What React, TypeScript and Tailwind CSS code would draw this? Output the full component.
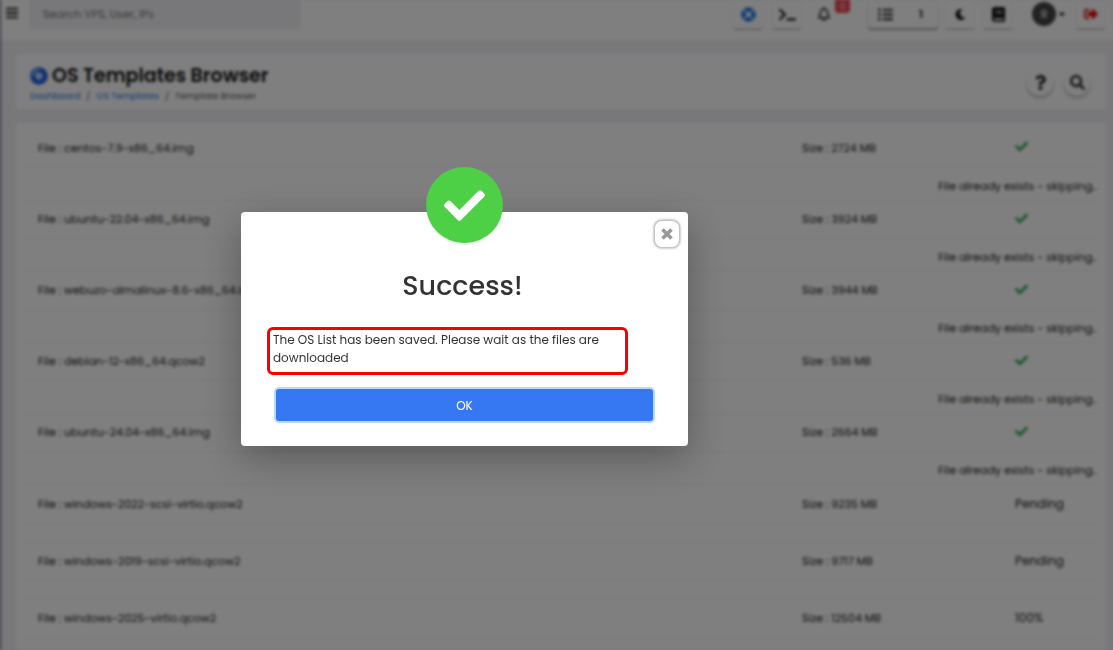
import React, { useState } from 'react';
import {
  FaBars,
  FaBook,
  FaCaretDown,
  FaCheck,
  FaCompactDisc,
  FaLifeRing,
  FaListUl,
  FaMoon,
  FaQuestion,
  FaRegBell,
  FaSearch,
  FaSignOutAlt,
  FaTerminal,
} from 'react-icons/fa';

type Template = {
  file: string;
  size: string;
  status: string;
};

const templates: Template[] = [
  { file: 'centos-7.9-x86_64.img', size: '2724 MB', status: 'exists' },
  { file: 'ubuntu-22.04-x86_64.img', size: '3924 MB', status: 'exists' },
  { file: 'webuzo-almalinux-8.6-x86_64.img', size: '3944 MB', status: 'exists' },
  { file: 'debian-12-x86_64.qcow2', size: '536 MB', status: 'exists' },
  { file: 'ubuntu-24.04-x86_64.img', size: '2664 MB', status: 'exists' },
  { file: 'windows-2022-scsi-virtio.qcow2', size: '9235 MB', status: 'Pending' },
  { file: 'windows-2019-scsi-virtio.qcow2', size: '9717 MB', status: 'Pending' },
  { file: 'windows-2025-virtio.qcow2', size: '12504 MB', status: '100%' },
];

const barButton = 'flex h-7 w-7 items-center justify-center shadow-[0_2px_1px_rgba(0,0,0,0.18)]';
const roundButton =
  'flex h-[26px] w-[26px] items-center justify-center rounded-full text-[15px] text-[#222] shadow-[0_2px_3px_rgba(0,0,0,0.3)]';

const TopBar = () => {
  return (
    <header className="flex h-10 items-start bg-white pl-1 pr-2">
      <button aria-label="Toggle menu" className="mt-1.5 text-[14px] text-[#111]">
        <FaBars />
      </button>
      <input
        type="search"
        aria-label="Search"
        placeholder="Search VPS, User, IPs"
        className="ml-2.5 h-[29px] w-[272px] rounded-b bg-[#f1f1f5] px-3.5 text-[11px] placeholder-[#777]"
      />

      <div className="ml-auto flex items-center text-[13px] text-[#111]">
        <button aria-label="Support" className={`${barButton} text-[15px] text-[#1673e6]`}>
          <FaLifeRing />
        </button>
        <button aria-label="Terminal" className={`${barButton} ml-[11px] text-[17px]`}>
          <FaTerminal />
        </button>
        <button aria-label="Notifications" className="relative ml-[9px] flex h-7 w-7 items-center justify-center text-[14px]">
          <FaRegBell />
          <span className="absolute -right-3 top-0 flex h-[13px] w-[15px] items-center justify-center rounded-b bg-[#f0414b] text-[9px] leading-3 text-white">
            0
          </span>
        </button>
        <button className="ml-[30px] flex h-7 w-[70px] items-center justify-between rounded pl-2.5 pr-[15px] shadow-[0_2px_2px_rgba(0,0,0,0.35)]">
          <FaListUl className="text-[15px]" />
          <span className="text-[11px] font-semibold">1</span>
        </button>
        <button aria-label="Dark mode" className={`${barButton} ml-2 text-[11px]`}>
          <FaMoon />
        </button>
        <button aria-label="Documentation" className={`${barButton} ml-2.5 text-[15px]`}>
          <FaBook />
        </button>
        <button className="ml-5 flex items-center">
          <span className="flex h-6 w-6 items-center justify-center rounded-full bg-[#444] text-[11px] text-white">R</span>
          <FaCaretDown className="ml-px text-[10px]" />
        </button>
        <button aria-label="Log out" className={`${barButton} ml-2.5 text-[14px] text-[#f00000]`}>
          <FaSignOutAlt />
        </button>
      </div>
    </header>
  );
};

const PageHeader = () => {
  return (
    <div className="flex h-[55px] items-center justify-between rounded bg-white pl-3.5 pr-4">
      <div className="pt-1">
        <h1 className="flex items-center gap-1 text-[19px] font-semibold leading-6 text-[#111]">
          <FaCompactDisc className="text-[18px] text-[#1c62e8]" />
          OS Templates Browser
        </h1>
        <nav className="flex gap-1.5 text-[9px] leading-4 text-[#555]">
          <a href="#dashboard" className="text-[#1673e6]">Dashboard</a>
          <span>/</span>
          <a href="#templates" className="text-[#1673e6]">OS Templates</a>
          <span>/</span>
          <span>Template Browser</span>
        </nav>
      </div>
      <div className="flex gap-[11px] pt-0.5">
        <button aria-label="Help" className={roundButton}>
          <FaQuestion />
        </button>
        <button aria-label="Search templates" className={roundButton}>
          <FaSearch />
        </button>
      </div>
    </div>
  );
};

const TemplateRows = ({ template }: { template: Template }) => {
  const exists = template.status === 'exists';

  return (
    <>
      <tr className={`${exists ? 'h-[38px]' : 'h-[39px]'} border-b border-[#e6eefa]`}>
        <td className="px-[13px]">File : {template.file}</td>
        <td className="px-[13px]">Size : {template.size}</td>
        <td className="px-[13px]">
          {exists ? (
            <FaCheck aria-label="Done" className="mb-0.5 text-[13px] text-[#28a745]" />
          ) : (
            <span className="text-[12px]">{template.status}</span>
          )}
        </td>
      </tr>
      <tr className={`${exists ? 'h-[33px]' : 'h-[18px]'} border-b border-[#e6eefa]`}>
        <td colSpan={3} className="pr-px pt-1 text-right">
          {exists && 'File already exists - skipping..'}
        </td>
      </tr>
    </>
  );
};

const SuccessDialog = ({ onClose }: { onClose: () => void }) => {
  return (
    <div className="fixed inset-0 flex items-start justify-center bg-black/50 pr-[184px] pt-[212px] backdrop-blur-[1px]">
      <div
        role="dialog"
        aria-modal="true"
        aria-labelledby="dialog-title"
        className="relative w-full max-w-[447px] rounded bg-white px-[26px] pb-[25px] pt-[54px] shadow-[0_12px_40px_rgba(0,0,0,0.3)]"
      >
        <div className="absolute -top-[45px] left-[185px] flex h-[76px] w-[77px] items-center justify-center rounded-full bg-[#4dcf46] text-white shadow-[0_2px_2px_rgba(0,0,0,0.1)]">
          <FaCheck className="text-[41px]" />
        </div>
        <button
          aria-label="Close"
          onClick={onClose}
          className="absolute right-2 top-2 flex h-7 w-[26px] items-center justify-center rounded-lg border border-[#c4c4c4] bg-white text-[#999] shadow-[0_0_3px_rgba(0,0,0,0.4)]"
        >
          <svg viewBox="0 0 12 12" className="h-3 w-3" stroke="currentColor" strokeWidth="3.6">
            <path d="M1.5 1.5L10.5 10.5M10.5 1.5L1.5 10.5" />
          </svg>
        </button>

        <h2 id="dialog-title" className="pr-1 text-center text-[27px] font-medium leading-10 text-[#333]">
          Success!
        </h2>
        <p className="mt-[21px] h-12 w-full max-w-[361px] rounded-md border-3 border-[#f80000] px-[3px] pt-px text-[12px] leading-[18px] text-[#333]">
          The OS List has been saved. Please wait as the files are downloaded
        </p>
        <div className="mt-3.5 px-[9px]">
          <button
            autoFocus
            onClick={onClose}
            className="h-8 w-full rounded-[3px] bg-[#3578f2] pt-0.5 text-[12px] text-white outline-none ring-2 ring-[#b9dafb]"
          >
            OK
          </button>
        </div>
      </div>
    </div>
  );
};

export default function App() {
  const [open, setOpen] = useState(true);

  return (
    <div className="bg-[#f1f1f6] font-['Poppins','Inter',sans-serif]">
      <div className={`h-screen overflow-hidden border-l border-[#3b3550] ${open ? 'blur-[1px]' : ''}`}>
        <TopBar />
        <main className="flex flex-col gap-3.5 pl-[15px] pr-[7px] pt-3.5">
          <PageHeader />
          <section className="rounded bg-white pb-6 pl-[9px] pr-2 pt-1.5">
            <table className="w-full table-fixed border-collapse text-[11px] leading-4 text-[#222]">
              <colgroup>
                <col />
                <col className="w-[213px]" />
                <col className="w-[96px]" />
              </colgroup>
              <tbody>
                {templates.map((template) => (
                  <TemplateRows key={template.file} template={template} />
                ))}
              </tbody>
            </table>
          </section>
        </main>
      </div>
      {open && <SuccessDialog onClose={() => setOpen(false)} />}
    </div>
  );
}
